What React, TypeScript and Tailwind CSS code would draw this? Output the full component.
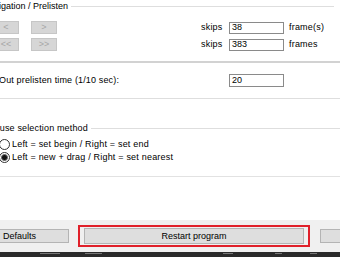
import React from "react";

const NavBtn = ({ label, className = "" }: { label: string; className?: string }) => (
  <div
    className={`h-[13px] w-[26px] shrink-0 flex items-center justify-center bg-[#d6d6d6] border border-[#c6c6c6] text-[#a6a6a6] text-[9px] leading-none ${className}`}
  >
    {label}
  </div>
);

const Field = ({ value, className = "" }: { value: string; className?: string }) => (
  <div
    className={`h-[12px] w-[55px] shrink-0 flex items-center bg-white border border-[#8a8a8a] pl-[2px] text-[9px] leading-none text-black ${className}`}
  >
    {value}
  </div>
);

const Radio = ({ checked }: { checked?: boolean }) => (
  <div className="w-[11px] h-[11px] rounded-full border border-[#333] bg-white flex items-center justify-center shrink-0">
    {checked && <div className="w-[7px] h-[7px] rounded-full bg-[#111] border border-[#666]" />}
  </div>
);

export default function App() {
  return (
    <div
      className="w-[340px] h-[257px] bg-white overflow-hidden flex flex-col text-black text-[9px] leading-none"
      style={{ fontFamily: '"Liberation Sans", Arial, sans-serif' }}
    >
      {/* Navigation / Prelisten group */}
      <div className="h-[61px] flex flex-col shrink-0">
        <div className="h-[12px] flex items-center">
          <span className="ml-[-17px] whitespace-nowrap">Navigation / Prelisten</span>
          <div className="ml-[3px] h-[1px] w-[263px] bg-[#dedede]" />
        </div>
        <div className="mt-[9px] flex flex-col gap-[4px]">
          <div className="flex items-center h-[13px]">
            <div className="w-[202px] shrink-0 flex gap-[12px] ml-[-7px]">
              <NavBtn label="<" />
              <NavBtn label=">" />
            </div>
            <span className="ml-[6px] w-[21px] shrink-0 text-right tracking-[0.2px]">skips</span>
            <Field value="38" className="ml-[7px]" />
            <span className="ml-[5px] tracking-[0.2px]">frame(s)</span>
          </div>
          <div className="flex items-center h-[13px]">
            <div className="w-[202px] shrink-0 flex gap-[12px] ml-[-7px]">
              <NavBtn label="<<" />
              <NavBtn label=">>" />
            </div>
            <span className="ml-[6px] w-[21px] shrink-0 text-right tracking-[0.2px]">skips</span>
            <Field value="383" className="ml-[7px]" />
            <span className="ml-[5px] tracking-[0.2px]">frames</span>
          </div>
        </div>
      </div>

      <div className="h-[2px] bg-[#d2d2d2] shrink-0" />

      {/* Out prelisten time */}
      <div className="h-[35px] flex items-center shrink-0">
        <span className="w-[229px] shrink-0 ml-[-1px] whitespace-nowrap tracking-[0.15px]">Out prelisten time (1/10 sec):</span>
        <Field value="20" className="h-[13px] ml-[1px]" />
      </div>

      <div className="h-[1px] bg-[#dedede] shrink-0" />

      <div className="h-[23px] shrink-0" />

      {/* Mouse selection method */}
      <div className="h-[12px] flex items-center shrink-0">
        <span className="ml-[-13px] whitespace-nowrap tracking-[0.15px]">Mouse selection method</span>
        <div className="ml-[3px] h-[1px] flex-1 bg-[#dedede]" />
      </div>
      <div className="mt-[5px] flex flex-col gap-[2px] shrink-0">
        <div className="h-[11px] flex items-center gap-[2px] ml-[-1px]">
          <Radio />
          <span className="whitespace-nowrap tracking-[0.2px]">Left = set begin / Right = set end</span>
        </div>
        <div className="h-[11px] flex items-center gap-[2px] ml-[-1px]">
          <Radio checked />
          <span className="whitespace-nowrap tracking-[0.2px]">Left = new + drag / Right = set nearest</span>
        </div>
      </div>

      <div className="h-[13px] shrink-0" />
      <div className="h-[1px] bg-[#e2e2e2] shrink-0" />
      <div className="flex-1 bg-white" />

      {/* Bottom button bar */}
      <div className="h-[32px] bg-[#f0f0f0] flex items-center shrink-0">
        <div className="h-[14px] w-[75px] shrink-0 ml-[-6px] bg-[#dedede] border border-[#b4b4b4] flex items-center pl-[8px]">
          Defaults
        </div>
        <div className="ml-[9px] w-[232px] shrink-0 h-[22px] border-2 border-[#e0202a] flex items-center justify-center">
          <div className="w-[220px] h-[16px] bg-[#dedede] border border-[#b4b4b4] flex items-center justify-center">
            Restart program
          </div>
        </div>
        <div className="ml-[10px] h-[14px] w-[40px] bg-[#dedede] border border-[#b4b4b4] shrink-0" />
      </div>

      {/* Taskbar strip */}
      <div className="h-[5px] bg-[#2a2a2a] flex items-start shrink-0">
        <div className="ml-[40px] mt-[1px] h-[1px] w-[20px] bg-[#777] shrink-0" />
        <div className="ml-[25px] mt-[1px] h-[1px] w-[17px] bg-[#777] shrink-0" />
        <div className="ml-[121px] mt-[1px] h-[1px] w-[10px] bg-[#777] shrink-0" />
        <div className="ml-[42px] mt-[1px] h-[1px] w-[7px] bg-[#777] shrink-0" />
        <div className="ml-[28px] mt-[1px] h-[1px] w-[7px] bg-[#777] shrink-0" />
      </div>
    </div>
  );
}
